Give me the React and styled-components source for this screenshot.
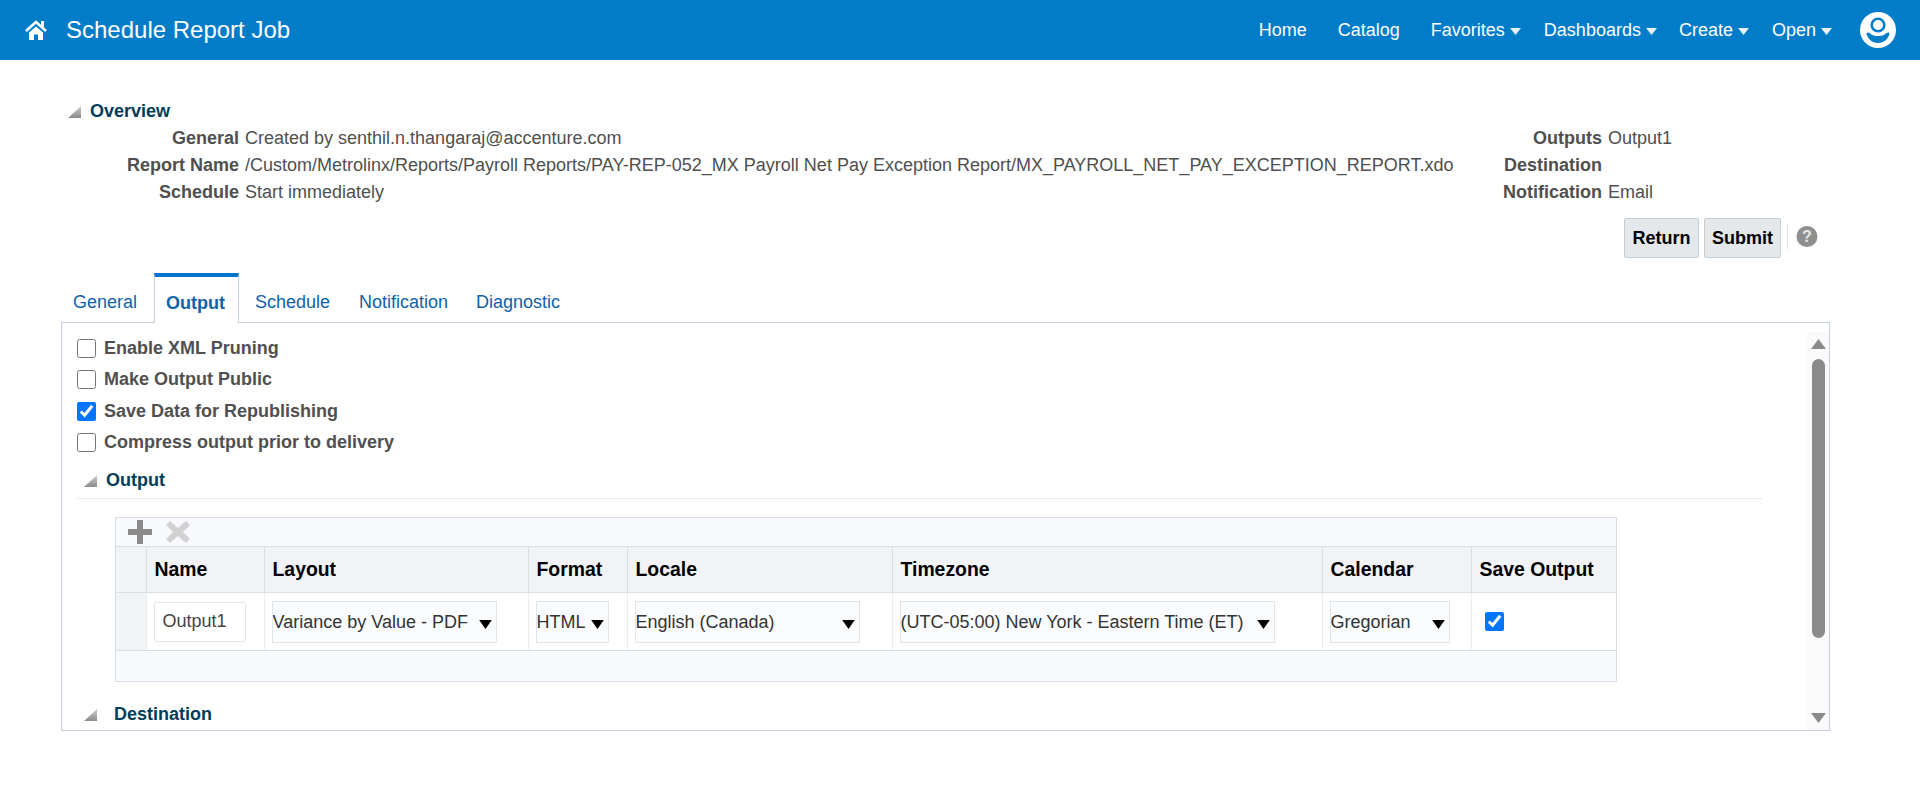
import React from 'react';
import styled, { createGlobalStyle } from 'styled-components';

const arrow = "data:image/svg+xml;charset=utf-8,<svg xmlns='http://www.w3.org/2000/svg' viewBox='0 0 14 10'><polygon points='0,0 14,0 7,10' fill='black'/></svg>";

const Global = createGlobalStyle`
  html, body {
    margin: 0;
    padding: 0;
    background: #fff;
    font-family: "Liberation Sans", Arial, sans-serif;
    overflow: hidden;
  }
`;

const Page = styled.div`
  width: 1920px;
  height: 800px;
`;

const Header = styled.header`
  height: 60px;
  background: #007cc9;
  color: #fff;
  display: flex;
  align-items: center;
  padding: 0 24px 0 25px;
`;

const HomeIcon = styled.svg`
  width: 22px;
  height: 20px;
  margin-right: 19px;
`;

const Title = styled.div`
  font-size: 24px;
  flex: 1;
`;

const Nav = styled.nav`
  display: flex;
  align-items: center;
`;

const NavItem = styled.div`
  font-size: 18px;
  display: flex;
  align-items: center;
  margin-left: ${(p) => p.$gap}px;
`;

const NavCaret = styled.svg`
  width: 11px;
  height: 7px;
  margin-left: 5px;
  margin-top: 2px;
`;

const Avatar = styled.svg`
  width: 36px;
  height: 36px;
  margin-left: 28px;
`;

const Main = styled.main`
  padding: 41px 90px 0 61px;
`;

const SectionTitle = styled.div`
  display: flex;
  align-items: center;
  height: 20px;
  color: #003d5b;
  font-weight: bold;
  font-size: 18px;
  padding-left: ${(p) => p.$indent}px;
`;

const Twisty = styled.svg`
  width: 13px;
  height: 13px;
  margin-right: ${(p) => p.$gap}px;
`;

const Overview = styled.div`
  display: grid;
  grid-template-columns: 1441px auto;
  margin-top: 4px;
`;

const InfoGrid = styled.div`
  display: grid;
  grid-template-columns: ${(p) => p.$label}px auto;
  grid-auto-rows: 27px;
  column-gap: 6px;
  align-items: center;
  font-size: 18px;
  color: #4f4f4f;
`;

const InfoLabel = styled.div`
  font-weight: bold;
  text-align: right;
  white-space: nowrap;
`;

const InfoValue = styled.div`
  white-space: nowrap;
`;

const Actions = styled.div`
  display: flex;
  justify-content: flex-end;
  align-items: center;
  gap: 5px;
  margin-top: 12px;
  padding-right: 12px;
`;

const Button = styled.button`
  height: 40px;
  width: ${(p) => p.$width}px;
  padding: 0;
  background: #e4e8ea;
  border: 1px solid #c4ced7;
  border-radius: 2px;
  font: bold 18px "Liberation Sans", Arial, sans-serif;
  color: #000;
`;

const Separator = styled.div`
  width: 1px;
  height: 25px;
  background: #dfe4ea;
  margin-left: 1px;
  margin-top: -4px;
`;

const HelpIcon = styled.svg`
  width: 22px;
  height: 23px;
  margin-left: 3px;
  margin-top: -3px;
`;

const Tabs = styled.div`
  display: flex;
  margin-top: 15px;
  height: 50px;
`;

const Tab = styled.div`
  box-sizing: border-box;
  height: ${(p) => (p.$active ? 50 : 49)}px;
  width: ${(p) => p.$width}px;
  display: flex;
  align-items: center;
  padding: 10px 0 0 ${(p) => p.$left}px;
  font-size: 18px;
  color: #0f62a8;
  position: relative;
  z-index: 1;
  ${(p) =>
    p.$active &&
    `
    font-weight: bold;
    background: #fff;
    border-top: 4px solid #0572ce;
    border-left: 1px solid #c4d0de;
    border-right: 1px solid #c4d0de;
    padding-top: 6px;
  `}
`;

const Panel = styled.section`
  box-sizing: border-box;
  width: 1769px;
  height: 409px;
  margin-top: -1px;
  border: 1px solid #c4d0de;
  display: flex;
`;

const PanelBody = styled.div`
  flex: 1;
  min-width: 0;
  padding: 10px 45px 0 15px;
  overflow: hidden;
`;

const CheckRow = styled.label`
  display: flex;
  align-items: center;
  height: 31.3px;
  font-size: 18px;
  font-weight: bold;
  color: #505050;
`;

const CheckBox = styled.input`
  width: 19px;
  height: 19px;
  margin: 0 8px 0 0;
`;

const SubTitle = styled(SectionTitle)`
  margin-top: ${(p) => p.$top}px;
`;

const Divider = styled.div`
  height: 1px;
  background: #e8ebee;
  margin-top: 8px;
`;

const TableBox = styled.div`
  box-sizing: border-box;
  width: 1502px;
  height: 165px;
  margin: 18px 0 0 38px;
  border: 1px solid #d6dfe6;
  background: #f7f9fc;
`;

const TableTools = styled.div`
  box-sizing: border-box;
  height: 28px;
  display: flex;
  align-items: center;
  gap: 12px;
  padding-left: 11px;
`;

const ToolIcon = styled.svg`
  width: 26px;
  height: 26px;
`;

const Table = styled.table`
  border-collapse: collapse;
  table-layout: fixed;
  width: 1500px;
`;

const Th = styled.th`
  box-sizing: border-box;
  height: 46px;
  padding: 0 0 0 8px;
  text-align: left;
  font-size: 19.4px;
  color: #000;
  background: #f1f3f7;
  border: 1px solid #d6dfe6;
  border-left-width: ${(p) => (p.$first ? 0 : 1)}px;
  border-right-width: ${(p) => (p.$last ? 0 : 1)}px;
`;

const Td = styled.td`
  box-sizing: border-box;
  height: 58px;
  padding: 0 0 0 7px;
  background: ${(p) => (p.$head ? '#f1f3f7' : '#fff')};
  border: 1px solid #e9edf0;
  border-bottom-color: #d6dfe6;
  border-left-width: ${(p) => (p.$first ? 0 : 1)}px;
  border-right-width: ${(p) => (p.$last ? 0 : 1)}px;
`;

const TextInput = styled.input`
  box-sizing: border-box;
  display: block;
  width: 92px;
  height: 40px;
  padding: 0 0 0 8px;
  border: 1px solid #e3e7ea;
  border-radius: 2px;
  background: #fff;
  color: #444;
  font: 18px "Liberation Sans", Arial, sans-serif;
`;

const Select = styled.select`
  box-sizing: border-box;
  display: block;
  width: ${(p) => p.$width}px;
  height: 42px;
  padding: 0;
  border: 1px solid #dfe5ea;
  border-radius: 0;
  color: #333;
  font: 18px "Liberation Sans", Arial, sans-serif;
  appearance: none;
  -webkit-appearance: none;
  background-color: #fbfcfd;
  background-repeat: no-repeat;
  background-size: 13px 9px;
  background-position: right 4px top 18px;
  background-image: url("${arrow}");
`;

const RowCheck = styled(CheckBox)`
  display: block;
  margin: 0 0 0 6px;
`;

const ScrollBar = styled.div`
  width: 22px;
  margin-top: 9px;
  background: #fafafa;
  display: flex;
  flex-direction: column;
  align-items: center;
  padding: 7px 0;
  box-sizing: border-box;
  flex: none;
`;

const ScrollArrow = styled.svg`
  width: 15px;
  height: 10px;
  flex: none;
`;

const ScrollThumb = styled.div`
  width: 13px;
  height: 279px;
  margin-top: 10px;
  background: #8a8a8a;
  border-radius: 7px;
`;

const ScrollSpace = styled.div`
  flex: 1;
`;

const Triangle = ({ gap }) => (
  <Twisty $gap={gap} viewBox="0 0 13 13">
    <defs>
      <linearGradient id="tw" x1="0" y1="0" x2="0" y2="1">
        <stop offset="0" stopColor="#cfcfcf" />
        <stop offset="1" stopColor="#8a8a8a" />
      </linearGradient>
    </defs>
    <polygon points="13,1 13,13 0,13" fill="url(#tw)" />
  </Twisty>
);

const Caret = () => (
  <NavCaret viewBox="0 0 11 7">
    <polygon points="0,0 11,0 5.5,7" fill="#e8f2fa" />
  </NavCaret>
);

const columns = [
  { name: '', width: 30 },
  { name: 'Name', width: 118 },
  { name: 'Layout', width: 264 },
  { name: 'Format', width: 99 },
  { name: 'Locale', width: 265 },
  { name: 'Timezone', width: 430 },
  { name: 'Calendar', width: 149 },
  { name: 'Save Output', width: 145 },
];

export default function App() {
  return (
    <Page>
      <Global />
      <Header>
        <HomeIcon viewBox="0 0 22 20">
          <path d="M1 11 L11 2 L21 11" fill="none" stroke="#fff" strokeWidth="2.6" />
          <rect x="16" y="1" width="3" height="6" fill="#fff" />
          <path d="M4 12.5 L11 6.5 L18 12.5 V20 H13 V14.5 H9 V20 H4 Z" fill="#fff" />
        </HomeIcon>
        <Title>Schedule Report Job</Title>
        <Nav>
          <NavItem>Home</NavItem>
          <NavItem $gap={31}>Catalog</NavItem>
          <NavItem $gap={31}>Favorites<Caret /></NavItem>
          <NavItem $gap={23}>Dashboards<Caret /></NavItem>
          <NavItem $gap={22}>Create<Caret /></NavItem>
          <NavItem $gap={23}>Open<Caret /></NavItem>
          <Avatar viewBox="0 0 36 36">
            <circle cx="18" cy="18" r="18" fill="#fff" />
            <circle cx="18" cy="13" r="6.3" fill="none" stroke="#007cc9" strokeWidth="2.6" />
            <path d="M6.5 22 C6.5 20.5 8 20 9.5 21 C12 23.5 15 24 18 24 C21 24 24 23.5 26.5 21 C28 20 29.5 20.5 29.5 22 C28 27 24 31 18 31 C12 31 8 27 6.5 22 Z" fill="#007cc9" />
          </Avatar>
        </Nav>
      </Header>
      <Main>
        <SectionTitle $indent={7}>
          <Triangle gap={9} />
          Overview
        </SectionTitle>
        <Overview>
          <InfoGrid $label={178}>
            <InfoLabel>General</InfoLabel>
            <InfoValue>Created by senthil.n.thangaraj@accenture.com</InfoValue>
            <InfoLabel>Report Name</InfoLabel>
            <InfoValue>/Custom/Metrolinx/Reports/Payroll Reports/PAY-REP-052_MX Payroll Net Pay Exception Report/MX_PAYROLL_NET_PAY_EXCEPTION_REPORT.xdo</InfoValue>
            <InfoLabel>Schedule</InfoLabel>
            <InfoValue>Start immediately</InfoValue>
          </InfoGrid>
          <InfoGrid $label={100}>
            <InfoLabel>Outputs</InfoLabel>
            <InfoValue>Output1</InfoValue>
            <InfoLabel>Destination</InfoLabel>
            <InfoValue />
            <InfoLabel>Notification</InfoLabel>
            <InfoValue>Email</InfoValue>
          </InfoGrid>
        </Overview>
        <Actions>
          <Button $width={75}>Return</Button>
          <Button $width={77}>Submit</Button>
          <Separator />
          <HelpIcon viewBox="0 0 22 23">
            <circle cx="11" cy="11.5" r="10.5" fill="#8f8f8f" />
            <text x="11" y="17" textAnchor="middle" fontSize="16" fontWeight="bold" fill="#e6e6e6" fontFamily="Liberation Sans">?</text>
          </HelpIcon>
        </Actions>
        <Tabs>
          <Tab $width={93} $left={12}>General</Tab>
          <Tab $width={85} $left={11} $active>Output</Tab>
          <Tab $width={105} $left={16}>Schedule</Tab>
          <Tab $width={117} $left={15}>Notification</Tab>
          <Tab $width={110} $left={15}>Diagnostic</Tab>
        </Tabs>
        <Panel>
          <PanelBody>
            <CheckRow><CheckBox type="checkbox" />Enable XML Pruning</CheckRow>
            <CheckRow><CheckBox type="checkbox" />Make Output Public</CheckRow>
            <CheckRow><CheckBox type="checkbox" defaultChecked />Save Data for Republishing</CheckRow>
            <CheckRow><CheckBox type="checkbox" />Compress output prior to delivery</CheckRow>
            <SubTitle $indent={7} $top={12}>
              <Triangle gap={9} />
              Output
            </SubTitle>
            <Divider />
            <TableBox>
              <TableTools>
                <ToolIcon viewBox="0 0 26 26">
                  <path d="M10 1h6v9h9v6h-9v9h-6v-9H1v-6h9z" fill="#8a8a8a" />
                </ToolIcon>
                <ToolIcon viewBox="0 0 26 26">
                  <path d="M5 2l8 7 8-7 4 4-7 7 7 7-4 4-8-7-8 7-4-4 7-7-7-7z" fill="#d2d2d2" />
                </ToolIcon>
              </TableTools>
              <Table>
                <colgroup>
                  {columns.map((c) => <col key={c.name} width={c.width} />)}
                </colgroup>
                <thead>
                  <tr>
                    {columns.map((c, i) => (
                      <Th key={c.name} $first={i === 0} $last={i === columns.length - 1}>{c.name}</Th>
                    ))}
                  </tr>
                </thead>
                <tbody>
                  <tr>
                    <Td $first $head />
                    <Td><TextInput defaultValue="Output1" /></Td>
                    <Td>
                      <Select $width={225}><option>Variance by Value - PDF</option></Select>
                    </Td>
                    <Td>
                      <Select $width={73}><option>HTML</option></Select>
                    </Td>
                    <Td>
                      <Select $width={225}><option>English (Canada)</option></Select>
                    </Td>
                    <Td>
                      <Select $width={375}><option>(UTC-05:00) New York - Eastern Time (ET)</option></Select>
                    </Td>
                    <Td>
                      <Select $width={120}><option>Gregorian</option></Select>
                    </Td>
                    <Td $last><RowCheck type="checkbox" defaultChecked /></Td>
                  </tr>
                </tbody>
              </Table>
            </TableBox>
            <SubTitle $indent={7} $top={22}>
              <Triangle gap={17} />
              Destination
            </SubTitle>
          </PanelBody>
          <ScrollBar>
            <ScrollArrow viewBox="0 0 15 10"><polygon points="7.5,0 15,10 0,10" fill="#8a8a8a" /></ScrollArrow>
            <ScrollThumb />
            <ScrollSpace />
            <ScrollArrow viewBox="0 0 15 10"><polygon points="0,0 15,0 7.5,10" fill="#8a8a8a" /></ScrollArrow>
          </ScrollBar>
        </Panel>
      </Main>
    </Page>
  );
}
